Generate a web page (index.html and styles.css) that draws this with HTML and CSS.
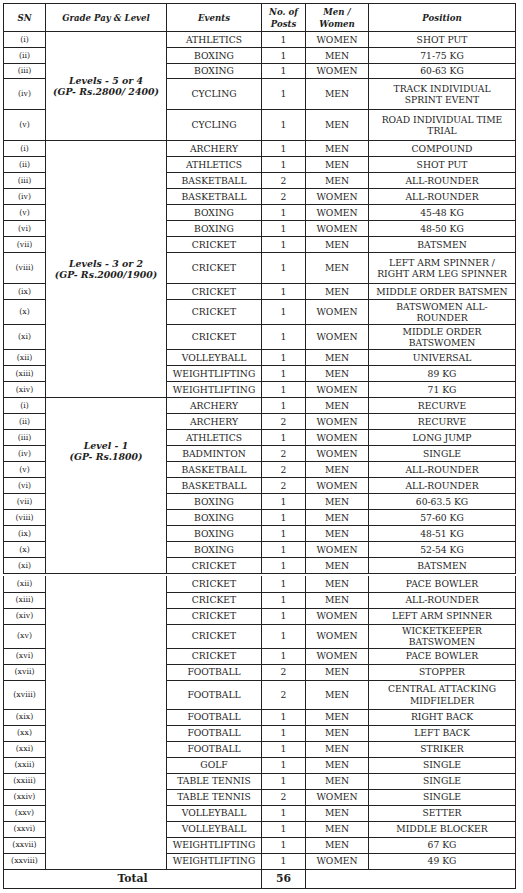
FILE: index.html
```html
<!DOCTYPE html>
<html>
<head>
<meta charset="utf-8">
<link rel="stylesheet" href="styles.css">
</head>
<body>
<div class="sheet">
<table class="grid">
<colgroup><col class="c-sn"><col class="c-gp"><col class="c-ev"><col class="c-np"><col class="c-mw"><col class="c-po"></colgroup>
<thead>
<tr class="head"><th>SN</th><th>Grade Pay &amp; Level</th><th>Events</th><th>No. of<br>Posts</th><th>Men /<br>Women</th><th>Position</th></tr>
</thead>
<tbody>
<tr class="h16"><td class="sn">(i)</td><td class="gp" rowspan="5">Levels - 5 or 4<br>(GP- Rs.2800/ 2400)</td><td>ATHLETICS</td><td>1</td><td>WOMEN</td><td>SHOT PUT</td></tr>
<tr class="h16"><td class="sn">(ii)</td><td>BOXING</td><td>1</td><td>MEN</td><td>71-75 KG</td></tr>
<tr class="h15"><td class="sn">(iii)</td><td>BOXING</td><td>1</td><td>WOMEN</td><td>60-63 KG</td></tr>
<tr class="h31"><td class="sn">(iv)</td><td>CYCLING</td><td>1</td><td>MEN</td><td>TRACK INDIVIDUAL<br>SPRINT EVENT</td></tr>
<tr class="h31"><td class="sn">(v)</td><td>CYCLING</td><td>1</td><td>MEN</td><td>ROAD INDIVIDUAL TIME<br>TRIAL</td></tr>

<tr class="h16"><td class="sn">(i)</td><td class="gp" rowspan="14">Levels - 3 or 2<br>(GP- Rs.2000/1900)</td><td>ARCHERY</td><td>1</td><td>MEN</td><td>COMPOUND</td></tr>
<tr class="h16"><td class="sn">(ii)</td><td>ATHLETICS</td><td>1</td><td>MEN</td><td>SHOT PUT</td></tr>
<tr class="h16"><td class="sn">(iii)</td><td>BASKETBALL</td><td>2</td><td>MEN</td><td>ALL-ROUNDER</td></tr>
<tr class="h16"><td class="sn">(iv)</td><td>BASKETBALL</td><td>2</td><td>WOMEN</td><td>ALL-ROUNDER</td></tr>
<tr class="h16"><td class="sn">(v)</td><td>BOXING</td><td>1</td><td>WOMEN</td><td>45-48 KG</td></tr>
<tr class="h16"><td class="sn">(vi)</td><td>BOXING</td><td>1</td><td>WOMEN</td><td>48-50 KG</td></tr>
<tr class="h16"><td class="sn">(vii)</td><td>CRICKET</td><td>1</td><td>MEN</td><td>BATSMEN</td></tr>
<tr class="h31"><td class="sn">(viii)</td><td>CRICKET</td><td>1</td><td>MEN</td><td>LEFT ARM SPINNER /<br>RIGHT ARM LEG SPINNER</td></tr>
<tr class="h16"><td class="sn">(ix)</td><td>CRICKET</td><td>1</td><td>MEN</td><td>MIDDLE ORDER BATSMEN</td></tr>
<tr class="h25"><td class="sn">(x)</td><td>CRICKET</td><td>1</td><td>WOMEN</td><td>BATSWOMEN ALL-<br>ROUNDER</td></tr>
<tr class="h25"><td class="sn">(xi)</td><td>CRICKET</td><td>1</td><td>WOMEN</td><td>MIDDLE ORDER<br>BATSWOMEN</td></tr>
<tr class="h16"><td class="sn">(xii)</td><td>VOLLEYBALL</td><td>1</td><td>MEN</td><td>UNIVERSAL</td></tr>
<tr class="h16"><td class="sn">(xiii)</td><td>WEIGHTLIFTING</td><td>1</td><td>MEN</td><td>89 KG</td></tr>
<tr class="h16"><td class="sn">(xiv)</td><td>WEIGHTLIFTING</td><td>1</td><td>WOMEN</td><td>71 KG</td></tr>

<tr class="h16"><td class="sn">(i)</td><td class="gp gp-top" rowspan="11">Level - 1<br>(GP- Rs.1800)</td><td>ARCHERY</td><td>1</td><td>MEN</td><td>RECURVE</td></tr>
<tr class="h16"><td class="sn">(ii)</td><td>ARCHERY</td><td>2</td><td>WOMEN</td><td>RECURVE</td></tr>
<tr class="h16"><td class="sn">(iii)</td><td>ATHLETICS</td><td>1</td><td>WOMEN</td><td>LONG JUMP</td></tr>
<tr class="h16"><td class="sn">(iv)</td><td>BADMINTON</td><td>2</td><td>WOMEN</td><td>SINGLE</td></tr>
<tr class="h16"><td class="sn">(v)</td><td>BASKETBALL</td><td>2</td><td>MEN</td><td>ALL-ROUNDER</td></tr>
<tr class="h16"><td class="sn">(vi)</td><td>BASKETBALL</td><td>2</td><td>WOMEN</td><td>ALL-ROUNDER</td></tr>
<tr class="h16"><td class="sn">(vii)</td><td>BOXING</td><td>1</td><td>MEN</td><td>60-63.5 KG</td></tr>
<tr class="h16"><td class="sn">(viii)</td><td>BOXING</td><td>1</td><td>MEN</td><td>57-60 KG</td></tr>
<tr class="h16"><td class="sn">(ix)</td><td>BOXING</td><td>1</td><td>MEN</td><td>48-51 KG</td></tr>
<tr class="h16"><td class="sn">(x)</td><td>BOXING</td><td>1</td><td>WOMEN</td><td>52-54 KG</td></tr>
<tr class="h16"><td class="sn">(xi)</td><td>CRICKET</td><td>1</td><td>MEN</td><td>BATSMEN</td></tr>
</tbody>
</table>

<table class="grid cont">
<colgroup><col class="c-sn"><col class="c-gp"><col class="c-ev"><col class="c-np"><col class="c-mw"><col class="c-po"></colgroup>
<tbody>
<tr class="h16 first"><td class="sn">(xii)</td><td class="gp" rowspan="17"></td><td>CRICKET</td><td>1</td><td>MEN</td><td>PACE BOWLER</td></tr>
<tr class="h16"><td class="sn">(xiii)</td><td>CRICKET</td><td>1</td><td>MEN</td><td>ALL-ROUNDER</td></tr>
<tr class="h16"><td class="sn">(xiv)</td><td>CRICKET</td><td>1</td><td>WOMEN</td><td>LEFT ARM SPINNER</td></tr>
<tr class="h24"><td class="sn">(xv)</td><td>CRICKET</td><td>1</td><td>WOMEN</td><td>WICKETKEEPER<br>BATSWOMEN</td></tr>
<tr class="h16"><td class="sn">(xvi)</td><td>CRICKET</td><td>1</td><td>WOMEN</td><td>PACE BOWLER</td></tr>
<tr class="h16"><td class="sn">(xvii)</td><td>FOOTBALL</td><td>2</td><td>MEN</td><td>STOPPER</td></tr>
<tr class="h29"><td class="sn">(xviii)</td><td>FOOTBALL</td><td>2</td><td>MEN</td><td>CENTRAL ATTACKING<br>MIDFIELDER</td></tr>
<tr class="h16"><td class="sn">(xix)</td><td>FOOTBALL</td><td>1</td><td>MEN</td><td>RIGHT BACK</td></tr>
<tr class="h16"><td class="sn">(xx)</td><td>FOOTBALL</td><td>1</td><td>MEN</td><td>LEFT BACK</td></tr>
<tr class="h16"><td class="sn">(xxi)</td><td>FOOTBALL</td><td>1</td><td>MEN</td><td>STRIKER</td></tr>
<tr class="h16"><td class="sn">(xxii)</td><td>GOLF</td><td>1</td><td>MEN</td><td>SINGLE</td></tr>
<tr class="h16"><td class="sn">(xxiii)</td><td>TABLE TENNIS</td><td>1</td><td>MEN</td><td>SINGLE</td></tr>
<tr class="h16"><td class="sn">(xxiv)</td><td>TABLE TENNIS</td><td>2</td><td>WOMEN</td><td>SINGLE</td></tr>
<tr class="h16"><td class="sn">(xxv)</td><td>VOLLEYBALL</td><td>1</td><td>MEN</td><td>SETTER</td></tr>
<tr class="h16"><td class="sn">(xxvi)</td><td>VOLLEYBALL</td><td>1</td><td>MEN</td><td>MIDDLE BLOCKER</td></tr>
<tr class="h16"><td class="sn">(xxvii)</td><td>WEIGHTLIFTING</td><td>1</td><td>MEN</td><td>67 KG</td></tr>
<tr class="h16"><td class="sn">(xxviii)</td><td>WEIGHTLIFTING</td><td>1</td><td>WOMEN</td><td>49 KG</td></tr>
<tr class="total"><td colspan="3">Total</td><td>56</td><td colspan="2"></td></tr>
</tbody>
</table>
</div>
</body>
</html>
```

FILE: styles.css
```css
html, body {
  margin: 0;
  padding: 0;
  background: #ffffff;
}

body {
  font-family: "DejaVu Serif", serif;
  color: #1e1e1e;
}

.sheet {
  padding: 3px 0 0 3px;
}

.grid {
  border-collapse: collapse;
  table-layout: fixed;
  width: 512px;
}

.c-sn { width: 42px; }
.c-gp { width: 121px; }
.c-ev { width: 95px; }
.c-np { width: 44px; }
.c-mw { width: 63px; }
.c-po { width: 147px; }

.grid th,
.grid td {
  border: 1px solid #222222;
  padding: 0;
  text-align: center;
  vertical-align: middle;
  white-space: nowrap;
  overflow: hidden;
}

.grid td {
  font-size: 9.2px;
  line-height: 11.5px;
}

.grid th {
  font-size: 8.6px;
  line-height: 12px;
  font-weight: bold;
  font-style: italic;
}

.head { height: 28px; }
.h15 { height: 15px; }
.h16 { height: 16px; }
.h24 { height: 24px; }
.h25 { height: 25px; }
.h29 { height: 29px; }
.h31 { height: 31px; }

.grid td.sn {
  font-size: 7.8px;
}

.grid td.gp {
  font-size: 9.4px;
  line-height: 11px;
  font-weight: bold;
  font-style: italic;
}

.grid td.gp-top {
  vertical-align: top;
  padding-top: 42px;
}

.cont {
  margin-top: 2px;
}

.cont .first td {
  border-top: none;
}

.total {
  height: 19px;
}

.grid .total td {
  font-size: 10.8px;
  font-weight: bold;
}
```
